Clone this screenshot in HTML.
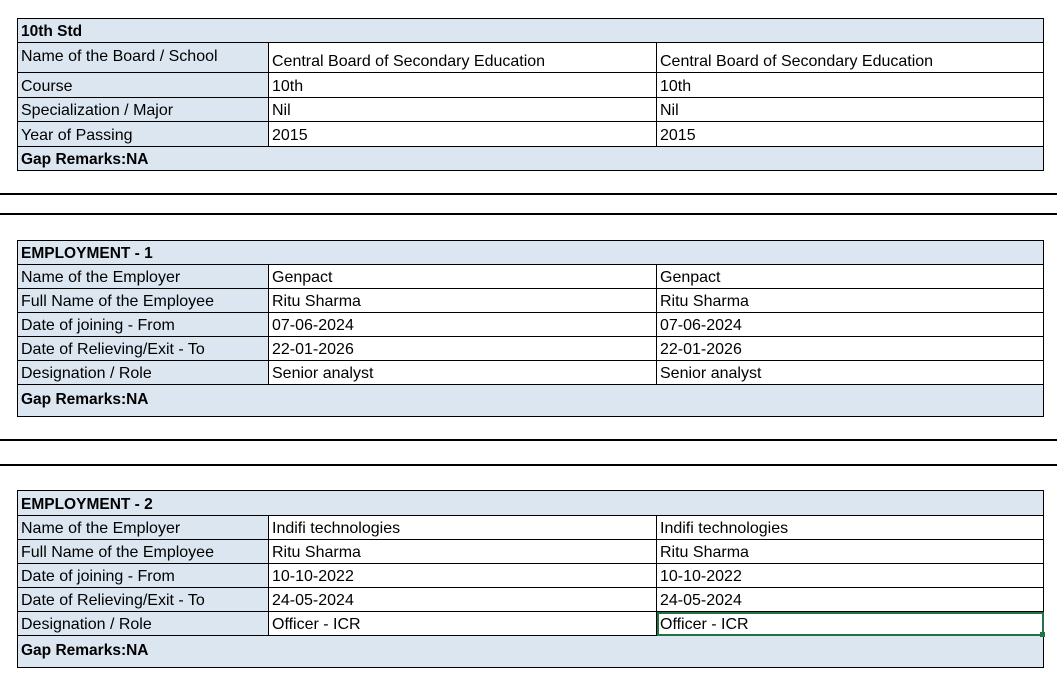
<!DOCTYPE html>
<html><head><style>
body{margin:0;width:1057px;height:685px;background:#fff;position:relative;overflow:hidden;font-family:"Liberation Sans",Arial,sans-serif;font-size:16px;color:#000}
table{position:absolute;left:17px;border-collapse:collapse;table-layout:fixed;width:1026px}
td{border:1px solid #000;padding:0 0 0 3px;vertical-align:bottom;white-space:nowrap;overflow:hidden;line-height:18px;padding-bottom:1px}
td.l{background:#dce6f1}
td.v{background:#fff}
td.h{background:#dce6f1;font-weight:bold;font-size:15.5px}
.line{position:absolute;left:0;width:1057px;height:2px;background:#000}
.sel{outline:2px solid #217346;outline-offset:-2px}
</style></head><body>
<table style="top:18px">
<colgroup><col style="width:251px"><col style="width:388px"><col style="width:387px"></colgroup>
<tr style="height:24px"><td class="h" colspan="3">10th Std</td></tr>
<tr style="height:30px"><td class="l" style="vertical-align:top;padding-top:5px">Name of the Board / School</td><td class="v">Central Board of Secondary Education</td><td class="v">Central Board of Secondary Education</td></tr>
<tr style="height:25px"><td class="l">Course</td><td class="v">10th</td><td class="v">10th</td></tr>
<tr style="height:24px"><td class="l">Specialization / Major</td><td class="v">Nil</td><td class="v">Nil</td></tr>
<tr style="height:25px"><td class="l">Year of Passing</td><td class="v">2015</td><td class="v">2015</td></tr>
<tr style="height:24px"><td class="h" colspan="3">Gap Remarks:NA</td></tr>
</table>
<div class="line" style="top:193px"></div>
<div class="line" style="top:213px"></div>
<table style="top:240px">
<colgroup><col style="width:251px"><col style="width:388px"><col style="width:387px"></colgroup>
<tr style="height:24px"><td class="h" colspan="3">EMPLOYMENT - 1</td></tr>
<tr style="height:24px"><td class="l">Name of the Employer</td><td class="v">Genpact</td><td class="v">Genpact</td></tr>
<tr style="height:24px"><td class="l">Full Name of the Employee</td><td class="v">Ritu Sharma</td><td class="v">Ritu Sharma</td></tr>
<tr style="height:24px"><td class="l">Date of joining - From</td><td class="v">07-06-2024</td><td class="v">07-06-2024</td></tr>
<tr style="height:24px"><td class="l">Date of Relieving/Exit - To</td><td class="v">22-01-2026</td><td class="v">22-01-2026</td></tr>
<tr style="height:24px"><td class="l">Designation / Role</td><td class="v">Senior analyst</td><td class="v">Senior analyst</td></tr>
<tr style="height:32px"><td class="h" colspan="3" style="vertical-align:middle">Gap Remarks:NA</td></tr>
</table>
<div class="line" style="top:439px"></div>
<div class="line" style="top:464px"></div>
<table style="top:490px">
<colgroup><col style="width:251px"><col style="width:388px"><col style="width:387px"></colgroup>
<tr style="height:25px"><td class="h" colspan="3">EMPLOYMENT - 2</td></tr>
<tr style="height:24px"><td class="l">Name of the Employer</td><td class="v">Indifi technologies</td><td class="v">Indifi technologies</td></tr>
<tr style="height:24px"><td class="l">Full Name of the Employee</td><td class="v">Ritu Sharma</td><td class="v">Ritu Sharma</td></tr>
<tr style="height:24px"><td class="l">Date of joining - From</td><td class="v">10-10-2022</td><td class="v">10-10-2022</td></tr>
<tr style="height:24px"><td class="l">Date of Relieving/Exit - To</td><td class="v">24-05-2024</td><td class="v">24-05-2024</td></tr>
<tr style="height:24px"><td class="l">Designation / Role</td><td class="v">Officer - ICR</td><td class="v sel">Officer - ICR</td></tr>
<tr style="height:32px"><td class="h" colspan="3" style="vertical-align:middle">Gap Remarks:NA</td></tr>
</table>
<div style="position:absolute;left:1040px;top:632px;width:5px;height:5px;background:#217346"></div>
</body></html>
